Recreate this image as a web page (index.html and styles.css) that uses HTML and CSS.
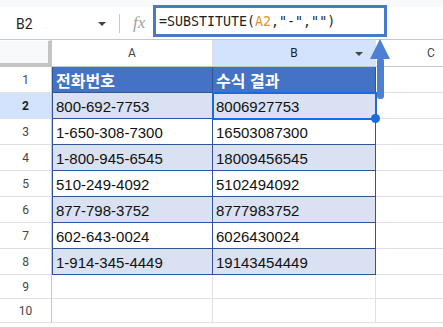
FILE: index.html
```html
<!DOCTYPE html>
<html lang="ko">
<head>
  <meta charset="UTF-8" />
  <title>SUBSTITUTE</title>
  <link rel="stylesheet" href="styles.css">
</head>
<body>
  <div class="sheet">
    <div class="formula-bar">
      <div class="name-box">B2</div>
      <div class="name-caret"></div>
      <div class="bar-sep"></div>
      <div class="fx">fx</div>
      <div class="formula-box">=SUBSTITUTE(<span class="ref">A2</span>,"-","")</div>
    </div>

    <div class="row head-row">
      <div class="corner"></div>
      <div class="col-head col-a">A</div>
      <div class="col-head col-b selected">B<span class="col-caret"></span></div>
      <div class="col-head col-c">C</div>
    </div>

    <div class="row data title">
      <div class="row-head">1</div>
      <div class="cell col-a">전화번호</div>
      <div class="cell col-b">수식 결과</div>
      <div class="cell col-c"></div>
    </div>
    <div class="row data band">
      <div class="row-head selected">2</div>
      <div class="cell col-a">800-692-7753</div>
      <div class="cell col-b active">8006927753<span class="handle"></span></div>
      <div class="cell col-c"></div>
    </div>
    <div class="row data">
      <div class="row-head">3</div>
      <div class="cell col-a">1-650-308-7300</div>
      <div class="cell col-b">16503087300</div>
      <div class="cell col-c"></div>
    </div>
    <div class="row data band">
      <div class="row-head">4</div>
      <div class="cell col-a">1-800-945-6545</div>
      <div class="cell col-b">18009456545</div>
      <div class="cell col-c"></div>
    </div>
    <div class="row data">
      <div class="row-head">5</div>
      <div class="cell col-a">510-249-4092</div>
      <div class="cell col-b">5102494092</div>
      <div class="cell col-c"></div>
    </div>
    <div class="row data band">
      <div class="row-head">6</div>
      <div class="cell col-a">877-798-3752</div>
      <div class="cell col-b">8777983752</div>
      <div class="cell col-c"></div>
    </div>
    <div class="row data">
      <div class="row-head">7</div>
      <div class="cell col-a">602-643-0024</div>
      <div class="cell col-b">6026430024</div>
      <div class="cell col-c"></div>
    </div>
    <div class="row data band">
      <div class="row-head">8</div>
      <div class="cell col-a">1-914-345-4449</div>
      <div class="cell col-b">19143454449</div>
      <div class="cell col-c"></div>
    </div>
    <div class="row empty">
      <div class="row-head">9</div>
      <div class="cell col-a"></div>
      <div class="cell col-b"></div>
      <div class="cell col-c"></div>
    </div>
    <div class="row empty">
      <div class="row-head">10</div>
      <div class="cell col-a"></div>
      <div class="cell col-b"></div>
      <div class="cell col-c"></div>
    </div>

    <!-- arrow pointing to the formula -->
    <svg class="arrow" width="26" height="66" viewBox="0 0 26 66">
      <path d="M12 3 L22 23 L2 23 Z" fill="#4f7fd2"/>
      <rect x="9" y="22" width="7" height="41" rx="3" fill="#4f7fd2"/>
    </svg>
  </div>
</body>
</html>
```

FILE: styles.css
```css
body {
  margin: 0;
  background-color: white;
  font-family: Roboto, 'Liberation Sans', sans-serif;
}

.sheet {
  position: relative;
  width: 443px;
  height: 327px;
  overflow: hidden;
}

.formula-bar {
  display: flex;
  align-items: flex-start;
  height: 39px;
  border-bottom: 1px solid #c7c7c7;
  background: linear-gradient(#f8f9fa 0, #f8f9fa 7px, white 7px);
}

.name-box {
  width: 70px;
  padding-left: 16px;
  margin-top: 16px;
  font-size: 14px;
  color: #1f1f1f;
}

.name-caret {
  width: 0;
  height: 0;
  margin: 22px 0 0 12px;
  border-left: 4px solid transparent;
  border-right: 4px solid transparent;
  border-top: 4px solid #444;
}

.bar-sep {
  width: 1px;
  height: 19px;
  margin: 14px 0 0 13px;
  background-color: #c7c7c7;
}

.fx {
  margin: 13px 0 0 13px;
  font-family: 'Liberation Serif', serif;
  font-style: italic;
  font-size: 17px;
  color: #a0a0a0;
  width: 20px;
}

.formula-box {
  margin: 5px 0 0 0;
  width: 234px;
  height: 32px;
  box-sizing: border-box;
  border: 3px solid #4a79cb;
  padding: 6px 0 0 3px;
  font-family: 'DejaVu Sans Mono', monospace;
  font-size: 13.3px;
  color: #1f1f1f;
  white-space: nowrap;
}

.formula-box .ref {
  color: #e8912d;
}

.row {
  display: flex;
  height: 26px;
}

.head-row {
  height: 27px;
}

.empty {
  height: 24px;
}

.row > div {
  box-sizing: border-box;
  flex-shrink: 0;
}

.col-a { width: 161px; }
.col-b { width: 163px; }
.col-c { width: 111px; }

.corner {
  width: 52px;
  background-color: #f8f9fa;
  border-right: 4px solid #c4c4c4;
  border-bottom: 4px solid #c4c4c4;
  border-top: 1px solid white;
}

.col-head {
  position: relative;
  text-align: center;
  font-size: 12px;
  color: #444746;
  line-height: 26px;
  border-right: 1px solid #e1e1e1;
  border-bottom: 1px solid #c4c7c5;
}

.col-head.selected {
  background-color: #d3e3fd;
  color: #1f1f1f;
}

.col-caret {
  position: absolute;
  right: 12px;
  top: 12px;
  border-left: 4px solid transparent;
  border-right: 4px solid transparent;
  border-top: 4px solid #444;
}

.row-head {
  width: 52px;
  text-align: center;
  font-size: 12px;
  color: #444746;
  line-height: 26px;
  border-right: 1px solid #c4c7c5;
  border-bottom: 1px solid #e1e1e1;
}

.empty .row-head {
  line-height: 24px;
}

.row-head.selected {
  background-color: #d3e3fd;
  color: #1f1f1f;
  font-weight: bold;
}

.cell {
  position: relative;
  font-family: 'Liberation Sans', sans-serif;
  font-size: 15px;
  color: #111;
  padding: 5px 0 0 3px;
  white-space: nowrap;
  border-right: 1px solid #e1e1e1;
  border-bottom: 1px solid #e1e1e1;
}

.data .col-a,
.data .col-b {
  border-right: 1px solid #2f5597;
  border-bottom: 1px solid #2f5597;
}

.data .col-a {
  border-left: 1px solid #2f5597;
  padding-left: 3px;
}

.band .col-a,
.band .col-b {
  background-color: #d9e1f2;
}

.title .col-a,
.title .col-b {
  background-color: #4472c4;
  color: white;
  font-family: 'Noto Sans CJK KR', sans-serif;
  font-weight: bold;
  font-size: 16px;
  padding-top: 0;
  line-height: 26px;
}

.cell.active {
  outline: 2px solid #1a6ae0;
  outline-offset: -1px;
}

.handle {
  position: absolute;
  right: -5px;
  bottom: -5px;
  width: 9px;
  height: 9px;
  border-radius: 50%;
  background-color: #1a6ae0;
  z-index: 2;
}

.arrow {
  position: absolute;
  left: 368px;
  top: 36px;
  z-index: 3;
}
```
